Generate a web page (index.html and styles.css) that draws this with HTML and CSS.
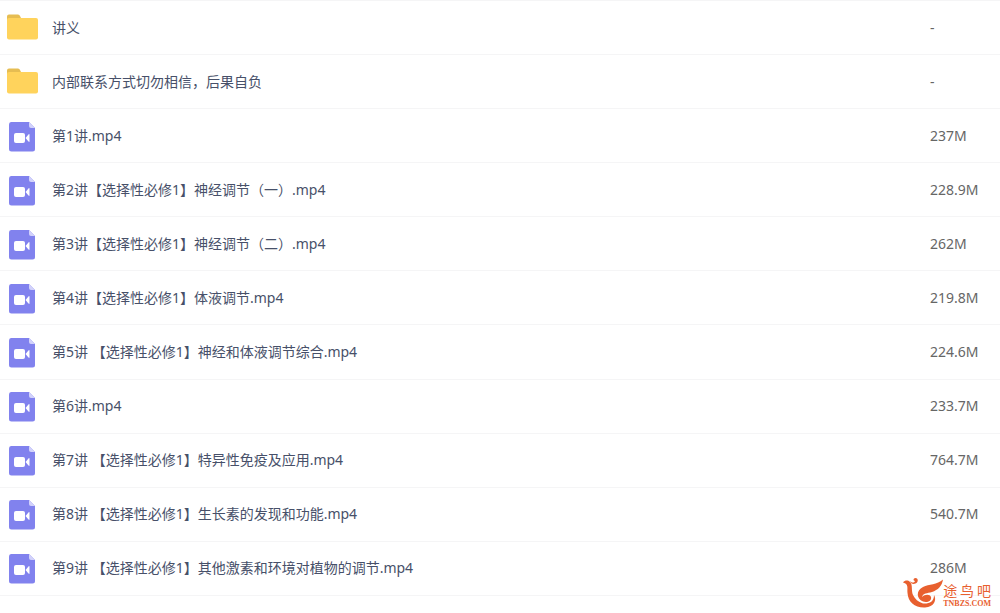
FILE: index.html
```html
<!DOCTYPE html>
<html lang="zh-CN">
<head>
<meta charset="utf-8">
<meta name="viewport" content="width=device-width, initial-scale=1">
<title>文件列表</title>
<link rel="stylesheet" href="styles.css">
</head>
<body>
<svg class="sprite" aria-hidden="true">
  <symbol id="folder" viewBox="0 0 32 32">
    <path d="M1 11V4.500Q1 2.500 3 2.500H12Q13.500 2.500 14 4L15 6V11Z" fill="#e6bd52"/>
    <path d="M1 7.500Q1 6 3 6H30Q32 6 32 8V25.500Q32 27.500 30 27.500H3Q1 27.500 1 25.500Z" fill="#ffd35c"/>
  </symbol>
  <symbol id="video" viewBox="0 0 32 32">
    <path d="M5 2H23L29 8V29Q29 31.500 26.500 31.500H5.500Q3 31.500 3 29V4.500Q3 2 5 2Z" fill="#8182ee"/>
    <path d="M23 2L29 8H25Q23 8 23 6Z" fill="#d2d2fb"/>
    <rect x="8" y="13" width="11" height="10" rx="2" fill="#fff"/>
    <path d="M19.500 18L22.500 14.500Q23.500 13.500 23.500 15V21Q23.500 22.500 22.500 21.500Z" fill="#fff"/>
  </symbol>
</svg>
<main class="page">
<table class="files">
<tbody>
<tr><td class="name"><div class="file"><svg class="icon"><use href="#folder"/></svg><span>讲义</span></div></td><td class="size">-</td></tr>
<tr><td class="name"><div class="file"><svg class="icon"><use href="#folder"/></svg><span>内部联系方式切勿相信，后果自负</span></div></td><td class="size">-</td></tr>
<tr><td class="name"><div class="file"><svg class="icon"><use href="#video"/></svg><span>第1讲.mp4</span></div></td><td class="size">237M</td></tr>
<tr><td class="name"><div class="file"><svg class="icon"><use href="#video"/></svg><span>第2讲【选择性必修1】神经调节（一）.mp4</span></div></td><td class="size">228.9M</td></tr>
<tr><td class="name"><div class="file"><svg class="icon"><use href="#video"/></svg><span>第3讲【选择性必修1】神经调节（二）.mp4</span></div></td><td class="size">262M</td></tr>
<tr><td class="name"><div class="file"><svg class="icon"><use href="#video"/></svg><span>第4讲【选择性必修1】体液调节.mp4</span></div></td><td class="size">219.8M</td></tr>
<tr><td class="name"><div class="file"><svg class="icon"><use href="#video"/></svg><span>第5讲 【选择性必修1】神经和体液调节综合.mp4</span></div></td><td class="size">224.6M</td></tr>
<tr><td class="name"><div class="file"><svg class="icon"><use href="#video"/></svg><span>第6讲.mp4</span></div></td><td class="size">233.7M</td></tr>
<tr><td class="name"><div class="file"><svg class="icon"><use href="#video"/></svg><span>第7讲 【选择性必修1】特异性免疫及应用.mp4</span></div></td><td class="size">764.7M</td></tr>
<tr><td class="name"><div class="file"><svg class="icon"><use href="#video"/></svg><span>第8讲 【选择性必修1】生长素的发现和功能.mp4</span></div></td><td class="size">540.7M</td></tr>
<tr><td class="name"><div class="file"><svg class="icon"><use href="#video"/></svg><span>第9讲 【选择性必修1】其他激素和环境对植物的调节.mp4</span></div></td><td class="size">286M</td></tr>
</tbody>
</table>
</main>
<div class="brand">
  <svg class="bird" viewBox="0 0 40 30" aria-hidden="true">
    <g fill="#e8602f">
      <path d="M0 4.500C2 2 5 2 7 4C10 7 8 12 10 17C12 21 15 24 20 25.500C26 26 31 24 31 17C34 22 31 29 22 29.500C12 30 5 24 4.500 15C4 10 6 6 0 4.500Z"/>
      <path d="M40 1.500C39 8 35 12 29 14C24 15.500 20 15 19 19C22 16 27 16 28 19C29 23 24 25 20 23.500C13 21 13 12 20 9C26 6 34 7 40 1.500Z"/>
      <path d="M7 3C9 5 11 5 12 3C10 3 10 0 12.500 0C15.500 0 15.500 4.500 12.500 5.500C10 6.500 7.500 5.500 7 3Z"/>
    </g>
  </svg>
  <div class="brand-text">
    <div class="brand-name"><span>途</span><span>鸟</span><span>吧</span></div>
    <div class="brand-site">TNBZS.COM</div>
  </div>
</div>
</body>
</html>
```
FILE: styles.css
```css
* { box-sizing: border-box; }
body {
  margin: 0;
  background: #fff;
  font: 14px/20px "Noto Sans", "Noto Sans CJK SC", sans-serif;
  color: #475069;
}
.sprite { position: absolute; width: 0; height: 0; }
.page { height: 100vh; padding-bottom: 17px; }
.files {
  width: 100%;
  height: 100%;
  border-collapse: separate;
  border-spacing: 0;
  border-top: 1px solid #f5f5f6;
}
.files td { padding: 0; border-bottom: 1px solid #f5f5f6; }
.files .name { padding-left: 6px; }
.files .size { width: 70px; color: #666; }
.file { display: flex; align-items: center; gap: 14px; }
.icon { width: 32px; height: 32px; flex: none; }
.brand {
  position: absolute;
  right: 9px;
  bottom: 5px;
  display: flex;
  align-items: flex-end;
  color: #e8602f;
}
.bird { width: 40px; height: 30px; }
.brand-name {
  display: flex;
  justify-content: space-between;
  font: 14px/20px "Noto Sans CJK SC", sans-serif;
}
.brand-site { font: bold 8px/8px "Liberation Serif", serif; }
```
